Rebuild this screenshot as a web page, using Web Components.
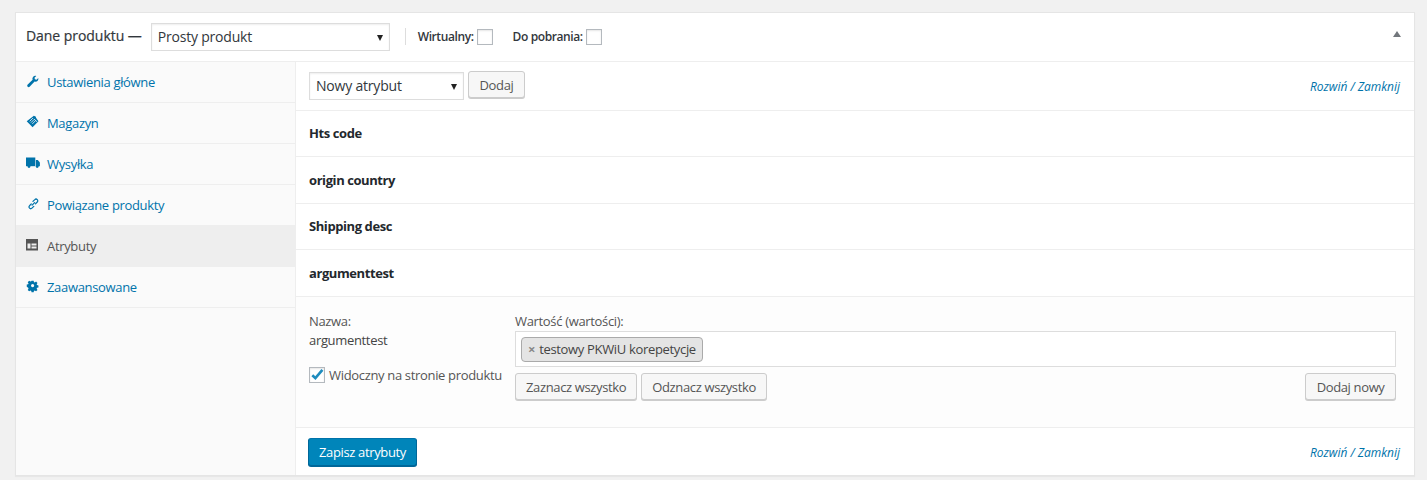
<!DOCTYPE html>
<html lang="pl">
<head>
<meta charset="utf-8">
<title>Dane produktu</title>
<style>
    html, body { margin: 0; height: 480px; overflow: hidden; background: #f1f1f1; }
    body { padding: 12px 12px 0 15px; font-family: "Open Sans", sans-serif; font-size: 13px; color: #444; }
</style>
</head>
<body>
<product-panel>
    <span slot="title">Dane produktu —</span>
    <fake-select slot="type" w="239" h="28" label="Prosty produkt"></fake-select>
    <opt-check slot="opts">Wirtualny:</opt-check>
    <opt-check slot="opts">Do pobrania:</opt-check>

    <side-tab slot="tabs" icon="wrench">Ustawienia główne</side-tab>
    <side-tab slot="tabs" icon="tag">Magazyn</side-tab>
    <side-tab slot="tabs" icon="truck">Wysyłka</side-tab>
    <side-tab slot="tabs" icon="link">Powiązane produkty</side-tab>
    <side-tab slot="tabs" icon="table" active>Atrybuty</side-tab>
    <side-tab slot="tabs" icon="gear">Zaawansowane</side-tab>

    <tool-bar>
        <fake-select w="155" h="28" label="Nowy atrybut"></fake-select>
        <wp-button up>Dodaj</wp-button>
    </tool-bar>
    <attr-row h="46">Hts code</attr-row>
    <attr-row h="47">origin country</attr-row>
    <attr-row h="46">Shipping desc</attr-row>
    <attr-row h="47">argumenttest</attr-row>
    <attr-detail></attr-detail>
    <tool-bar bottom>
        <wp-button primary>Zapisz atrybuty</wp-button>
    </tool-bar>
</product-panel>

<script>
// ikony zakladek (dashicons przerysowane recznie)
const ICONS = {
    wrench: '<path d="M9 .6a2.9 2.9 0 0 0-3 3.9L.9 9.5a1.5 1.5 0 0 0 2.1 2.1L8 6.4a2.9 2.9 0 0 0 3.7-3.500L9.900 4.600 8.300 4.100 7.900 2.500 9.700.7z" transform="translate(.6 1.200)"/>',
    tag: '<path d="M6.500 1.500 7.800.4l2 1 .6 1.600 2.500 3.500-6.400 6.400L.1 6.500z" transform="translate(.6 .3) scale(.92)"/><path d="M3.700 6.300 6.900 3.100M5 7.600 8.200 4.400M6.300 8.900 9.500 5.700M8 3.900l3 3" stroke="#fafafa" stroke-width=".8" fill="none"/>',
    truck: '<path d="M0 1.500h9.300v8.700H0z"/><path d="M9.900 4h1.900l2.100 2.500v3.700H9.900z"/><circle cx="3" cy="10.500" r="1.400"/><circle cx="11.200" cy="10.500" r="1.400"/>',
    link: '<path d="M5.500 8.500 8.500 5.500M6.500 4 8.700 1.900a2 2 0 0 1 2.900 2.900L9.500 7M7.500 10 5.300 12.100A2 2 0 0 1 2.400 9.200L4.500 7" fill="none" stroke="currentColor" stroke-width="1.500" stroke-linecap="round" transform="translate(1.500 1) scale(.84)"/>',
    table: '<path fill-rule="evenodd" d="M0 1h12v11.500H0zM1.500 5.500v5h3v-5zM5.500 5.500v2h5v-2zM5.500 8.500v2h5v-2z"/>',
    gear: '<path fill-rule="evenodd" d="M5.700.8h2.600l.4 1.800 1 .4 1.600-1 1.800 1.800-1 1.600.4 1 1.800.4v2.600l-1.800.4-.4 1 1 1.600-1.800 1.800-1.600-1-1 .4-.4 1.800H5.700l-.4-1.800-1-.4-1.600 1-1.800-1.800 1-1.600-.4-1L-.3 8.300V5.700l1.800-.4.4-1-1-1.600 1.800-1.800 1.600 1 1-.4zM7 5a2 2 0 1 0 0 4 2 2 0 0 0 0-4z" transform="translate(1 1) scale(.8)"/>'
};

class ProductPanel extends HTMLElement {
    constructor() {
        super();
        this.attachShadow({ mode: 'open' });
    }
    connectedCallback() {
        this.shadowRoot.innerHTML = `
            <style>
                :host { display: block; width: 1400px; height: 464px; box-sizing: border-box; background: #fff; border: 1px solid #e5e5e5; box-shadow: 0 1px 1px rgba(0,0,0,.04); }
                .head { height: 49px; box-sizing: border-box; border-bottom: 1px solid #eee; display: flex; align-items: center; padding: 0 0 0 10px; position: relative; color: #23282d; }
                .title { font-size: 14px; line-height: 20px; margin: 0 9px 3px 0; color: #32373c; -webkit-text-stroke: .2px #32373c; letter-spacing: -.05px; }
                .opts { display: flex; align-items: center; gap: 20px; height: 17px; margin: -1px 0 0 15px; padding-left: 12px; border-left: 1px solid #ddd; }
                .toggle { position: absolute; right: 13px; top: 18px; width: 0; height: 0; border: 4.5px solid transparent; border-top: 0; border-bottom: 6px solid #72777c; }
                .body { display: flex; height: 413px; }
                .tabs { width: 280px; box-sizing: border-box; flex: none; background: #fafafa; border-right: 1px solid #eee; }
                .main { flex: 1; min-width: 0; display: flex; flex-direction: column; }
            </style>
            <div class="head">
                <span class="title"><slot name="title"></slot></span>
                <slot name="type"></slot>
                <div class="opts"><slot name="opts"></slot></div>
                <span class="toggle"></span>
            </div>
            <div class="body">
                <div class="tabs"><slot name="tabs"></slot></div>
                <div class="main"><slot></slot></div>
            </div>
        `;
    }
}

class FakeSelect extends HTMLElement {
    constructor() {
        super();
        this.attachShadow({ mode: 'open' });
    }
    connectedCallback() {
        const w = this.getAttribute('w');
        const h = this.getAttribute('h');
        this.shadowRoot.innerHTML = `
            <style>
                :host { display: block; flex: none; width: ${w}px; height: ${h}px; box-sizing: border-box; border: 1px solid #ddd; background: #fff; box-shadow: inset 0 1px 2px rgba(0,0,0,.07); position: relative; font-size: 14px; line-height: 26px; padding-left: 6px; color: #32373c; letter-spacing: -.2px; }
                .arrow { position: absolute; right: 6px; top: 11px; width: 0; height: 0; border: 3.5px solid transparent; border-bottom: 0; border-top: 6px solid #222; }
            </style>
            ${this.getAttribute('label')}<span class="arrow"></span>
        `;
    }
}

class OptCheck extends HTMLElement {
    constructor() {
        super();
        this.attachShadow({ mode: 'open' });
    }
    connectedCallback() {
        this.shadowRoot.innerHTML = `
            <style>
                :host { display: flex; align-items: center; gap: 3px; font-size: 12px; line-height: 16px; font-weight: 600; color: #32373c; letter-spacing: -.4px; }
                i { display: block; width: 16px; height: 16px; box-sizing: border-box; background: #fff; border: 1px solid #b4b9be; box-shadow: inset 0 1px 2px rgba(0,0,0,.1); }
            </style>
            <slot></slot><i></i>
        `;
    }
}

class SideTab extends HTMLElement {
    constructor() {
        super();
        this.attachShadow({ mode: 'open' });
    }
    connectedCallback() {
        const icon = ICONS[this.getAttribute('icon')];
        this.shadowRoot.innerHTML = `
            <style>
                :host { display: flex; height: 41px; box-sizing: border-box; align-items: center; border-bottom: 1px solid #eee; padding: 0 0 0 10px; color: #0073aa; font-size: 13px; line-height: 20px; letter-spacing: -.33px; }
                :host([active]) { background: #eee; color: #555; }
                svg { width: 14px; height: 14px; flex: none; margin: -3px 7px 0 0; fill: currentColor; }
            </style>
            <svg viewBox="0 0 14 14">${icon}</svg><slot></slot>
        `;
    }
}

class ToolBar extends HTMLElement {
    constructor() {
        super();
        this.attachShadow({ mode: 'open' });
    }
    connectedCallback() {
        this.shadowRoot.innerHTML = `
            <style>
                :host { display: flex; flex: none; height: 49px; box-sizing: border-box; align-items: center; gap: 4px; padding: 0 14px 0 13px; border-bottom: 1px solid #eee; }
                :host([bottom]) { height: 47px; border-bottom: 0; padding-left: 12px; }
                :host([bottom]) a { margin-top: 2px; }
                a { margin-left: auto; font-size: 12px; font-style: italic; color: #0073aa; letter-spacing: -.02px; }
            </style>
            <slot></slot>
            <a>Rozwiń / Zamknij</a>
        `;
    }
}

class AttrRow extends HTMLElement {
    constructor() {
        super();
        this.attachShadow({ mode: 'open' });
    }
    connectedCallback() {
        this.shadowRoot.innerHTML = `
            <style>
                :host { display: flex; flex: none; height: ${this.getAttribute('h')}px; box-sizing: border-box; align-items: center; padding: 0 13px 1px; border-bottom: 1px solid #eee; font-size: 13px; font-weight: 700; color: #23282d; letter-spacing: -.42px; }
            </style>
            <slot></slot>
        `;
    }
}

class WpButton extends HTMLElement {
    constructor() {
        super();
        this.attachShadow({ mode: 'open' });
    }
    connectedCallback() {
        this.shadowRoot.innerHTML = `
            <style>
                :host { display: inline-flex; flex: none; align-items: center; height: 27px; box-sizing: border-box; padding: 0 10px; border: 1px solid #ccc; border-radius: 3px; background: #f7f7f7; box-shadow: 0 1px 0 #ccc; font-size: 13px; color: #555; white-space: nowrap; letter-spacing: -.36px; }
                :host([up]) { margin-bottom: 3px; padding: 0 10.5px; }
                :host([primary]) { background: #0085ba; border-color: #0073aa #006799 #006799; color: #fff; box-shadow: 0 1px 0 #006799; height: 28px; margin-top: 1px; }
            </style>
            <slot></slot>
        `;
    }
}

class AttrDetail extends HTMLElement {
    constructor() {
        super();
        this.attachShadow({ mode: 'open' });
    }
    connectedCallback() {
        this.shadowRoot.innerHTML = `
            <style>
                :host { display: flex; flex: none; height: 131px; box-sizing: border-box; padding: 14px 18px 0 13px; background: #fdfdfd; border-bottom: 1px solid #eee; font-size: 13px; line-height: 20px; color: #555; letter-spacing: -.33px; }
                .left { width: 206px; flex: none; }
                .name { margin-top: -1px; color: #444; }
                .vis { display: flex; align-items: center; gap: 4px; margin-top: 15px; }
                .vis i { display: block; flex: none; width: 16px; height: 16px; box-sizing: border-box; background: #fff; border: 1px solid #b4b9be; box-shadow: inset 0 1px 2px rgba(0,0,0,.1); position: relative; }
                .vis svg { position: absolute; left: -1px; top: -1px; width: 16px; height: 16px; }
                .right { flex: 1; min-width: 0; }
                .box { height: 36px; box-sizing: border-box; border: 1px solid #ddd; background: #fff; padding: 5px; display: flex; align-items: flex-start; }
                .chip { height: 25px; box-sizing: border-box; line-height: 23px; padding: 0 6px; background: #e4e4e4; border: 1px solid #aaa; border-radius: 4px; color: #444; }
                .chip b { color: #888; font-weight: 700; margin-right: 1px; }
                .btns { display: flex; gap: 4px; margin-top: 6px; }
                .btns .push { margin-left: auto; padding: 0 10.5px; }
            </style>
            <div class="left">
                <div>Nazwa:</div>
                <div class="name">argumenttest</div>
                <div class="vis">
                    <i><svg viewBox="0 0 16 16"><path d="M3.3 8.2 6.4 11.2 13.4 2.8" fill="none" stroke="#1e8cbe" stroke-width="2.6"/></svg></i>
                    Widoczny na stronie produktu
                </div>
            </div>
            <div class="right">
                <div>Wartość (wartości):</div>
                <div class="box"><span class="chip"><b>×</b> testowy PKWiU korepetycje</span></div>
                <div class="btns">
                    <wp-button>Zaznacz wszystko</wp-button>
                    <wp-button>Odznacz wszystko</wp-button>
                    <wp-button class="push">Dodaj nowy</wp-button>
                </div>
            </div>
        `;
    }
}

customElements.define('product-panel', ProductPanel);
customElements.define('fake-select', FakeSelect);
customElements.define('opt-check', OptCheck);
customElements.define('side-tab', SideTab);
customElements.define('tool-bar', ToolBar);
customElements.define('attr-row', AttrRow);
customElements.define('wp-button', WpButton);
customElements.define('attr-detail', AttrDetail);
</script>
</body>
</html>
